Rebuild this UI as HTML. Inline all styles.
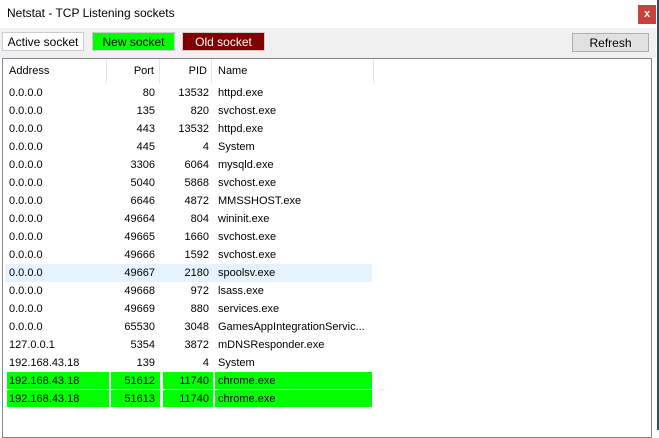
<!DOCTYPE html>
<html><head><meta charset="utf-8"><style>
body{margin:0;width:659px;height:430px;overflow:hidden;background:#fff;font-family:"Liberation Sans",sans-serif;font-size:11px;color:#000;position:relative}
.abs{position:absolute}
.title{left:7px;top:6px;font-size:12px}
.close{left:638px;top:5px;width:18px;height:19px;background:#c9403c;color:#fff;font-size:11px;text-align:center;line-height:18px;font-weight:bold}
.edge{left:657px;top:0;width:2px;height:430px;background:#3a4a60}
.tool{left:0;top:28px;width:656px;height:30px;background:#f0f0f0}
.btn{top:32px;height:19px;line-height:19px;text-align:center;font-size:12px;box-sizing:border-box}
.list{left:2px;top:58px;width:650px;height:380px;border:1px solid #828790;box-sizing:border-box;background:#fff}
.row{position:absolute;left:0;height:18px;line-height:18px;width:372px}
.c{position:absolute;top:0;height:18px;box-sizing:border-box}
.a{left:6px;width:99px;padding-left:0}
.p{left:107px;width:50px;text-align:right;padding-right:5px}
.d{left:159px;width:51px;text-align:right;padding-right:4px}
.n{left:211px;width:159px;padding-left:4px;white-space:nowrap;overflow:hidden}
.hdr .c{height:24px;line-height:24px;border-right:1px solid #e5e5e5}
.g .c{background:#00ff00;height:17px}
.g .a{left:4px;width:102px;padding-left:2px}.g .p{left:108px;width:49px}.g .d{left:160px;width:50px}.g .n{left:212px;width:157px;padding-left:3px}
</style></head><body>
<div class="abs title">Netstat - TCP Listening sockets</div>
<div class="abs close">x</div>
<div class="abs edge"></div>
<div class="abs tool"></div>
<div class="abs btn" style="left:2px;width:82px;background:#fff;border:1px solid #ccc">Active socket</div>
<div class="abs btn" style="left:92px;width:83px;background:#00ff00;border:1px solid #ccc">New socket</div>
<div class="abs btn" style="left:182px;width:83px;background:#800000;color:#fff;border:1px solid #ccc">Old socket</div>
<div class="abs btn" style="left:572px;top:33px;width:77px;background:#e1e1e1;border:1px solid #adadad">Refresh</div>
<div class="abs list">
<div class="row hdr" style="top:0;height:24px;width:372px">
<div class="c a" style="left:0;width:104px;padding-left:6px">Address</div><div class="c p" style="left:104px;width:53px">Port</div><div class="c d" style="left:157px;width:52px">PID</div><div class="c n" style="left:209px;width:162px;padding-left:6px">Name</div></div>
<div class="row" style="top:25px"><div class="c a">0.0.0.0</div><div class="c p">80</div><div class="c d">13532</div><div class="c n">httpd.exe</div></div>
<div class="row" style="top:43px"><div class="c a">0.0.0.0</div><div class="c p">135</div><div class="c d">820</div><div class="c n">svchost.exe</div></div>
<div class="row" style="top:61px"><div class="c a">0.0.0.0</div><div class="c p">443</div><div class="c d">13532</div><div class="c n">httpd.exe</div></div>
<div class="row" style="top:79px"><div class="c a">0.0.0.0</div><div class="c p">445</div><div class="c d">4</div><div class="c n">System</div></div>
<div class="row" style="top:97px"><div class="c a">0.0.0.0</div><div class="c p">3306</div><div class="c d">6064</div><div class="c n">mysqld.exe</div></div>
<div class="row" style="top:115px"><div class="c a">0.0.0.0</div><div class="c p">5040</div><div class="c d">5868</div><div class="c n">svchost.exe</div></div>
<div class="row" style="top:133px"><div class="c a">0.0.0.0</div><div class="c p">6646</div><div class="c d">4872</div><div class="c n">MMSSHOST.exe</div></div>
<div class="row" style="top:151px"><div class="c a">0.0.0.0</div><div class="c p">49664</div><div class="c d">804</div><div class="c n">wininit.exe</div></div>
<div class="row" style="top:169px"><div class="c a">0.0.0.0</div><div class="c p">49665</div><div class="c d">1660</div><div class="c n">svchost.exe</div></div>
<div class="row" style="top:187px"><div class="c a">0.0.0.0</div><div class="c p">49666</div><div class="c d">1592</div><div class="c n">svchost.exe</div></div>
<div class="row" style="top:205px;background:#e5f3ff;left:2px;width:367px"><div class="c a" style="left:4px">0.0.0.0</div><div class="c p" style="left:105px">49667</div><div class="c d" style="left:157px">2180</div><div class="c n" style="left:209px">spoolsv.exe</div></div>
<div class="row" style="top:223px"><div class="c a">0.0.0.0</div><div class="c p">49668</div><div class="c d">972</div><div class="c n">lsass.exe</div></div>
<div class="row" style="top:241px"><div class="c a">0.0.0.0</div><div class="c p">49669</div><div class="c d">880</div><div class="c n">services.exe</div></div>
<div class="row" style="top:259px"><div class="c a">0.0.0.0</div><div class="c p">65530</div><div class="c d">3048</div><div class="c n">GamesAppIntegrationServic...</div></div>
<div class="row" style="top:277px"><div class="c a">127.0.0.1</div><div class="c p">5354</div><div class="c d">3872</div><div class="c n">mDNSResponder.exe</div></div>
<div class="row" style="top:295px"><div class="c a">192.168.43.18</div><div class="c p">139</div><div class="c d">4</div><div class="c n">System</div></div>
<div class="row g" style="top:313px"><div class="c a">192.168.43.18</div><div class="c p">51612</div><div class="c d">11740</div><div class="c n">chrome.exe</div></div>
<div class="row g" style="top:331px"><div class="c a">192.168.43.18</div><div class="c p">51613</div><div class="c d">11740</div><div class="c n">chrome.exe</div></div>
</div>
</body></html>
